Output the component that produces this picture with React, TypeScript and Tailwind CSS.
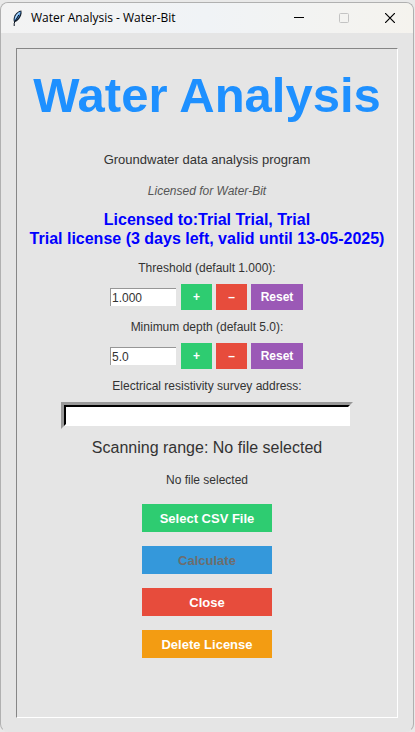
import { useState } from "react";

type StepperProps = {
  id: string;
  label: string;
  initial: number;
  step: number;
  digits: number;
};

function Stepper({ id, label, initial, step, digits }: StepperProps) {
  const [value, setValue] = useState(initial.toFixed(digits));

  const change = (delta: number) => {
    setValue(((parseFloat(value) || 0) + delta).toFixed(digits));
  };

  return (
    <div className="flex flex-col items-center">
      <label htmlFor={id} className="text-[12px] leading-5">
        {label}
      </label>
      <div className="mt-1.5 flex items-center gap-1 pr-px">
        <input
          id={id}
          type="text"
          value={value}
          onChange={(e) => setValue(e.target.value)}
          className="mr-px h-[18px] w-[66px] border-t border-l border-[#969696] bg-white px-px text-[12px] outline-none"
        />
        <button
          onClick={() => change(step)}
          className="h-[26px] w-[31px] bg-[#2ecc71] text-[12px] font-bold text-white"
        >
          +
        </button>
        <button
          onClick={() => change(-step)}
          className="h-[26px] w-[31px] bg-[#e74c3c] text-[12px] font-bold text-white"
        >
          –
        </button>
        <button
          onClick={() => setValue(initial.toFixed(digits))}
          className="h-[26px] w-[52px] bg-[#9b59b6] text-[12px] font-bold text-white"
        >
          Reset
        </button>
      </div>
    </div>
  );
}

function FeatherIcon() {
  return (
    <svg width="16" height="16" viewBox="0 0 16 16" aria-hidden="true">
      <path
        d="M12.4 .6C9.4 .8 6.4 3.4 5.2 6.6C4.4 8.8 4.4 10.6 5 12L7.4 11.6C10 9.6 12.2 6.4 12.6 3.2Z"
        fill="#14202e"
      />
      <path
        d="M11.8 1.4C9.4 2 7 4.4 6 7C5.4 8.8 5.4 10 5.8 11C8.8 9 11.4 5.6 11.8 1.4Z"
        fill="#4f97e0"
      />
      <path d="M10.6 2.6C8.6 4 7 6.2 6.4 8.6" stroke="#b4dafb" strokeWidth="1.2" fill="none" />
      <path d="M9.8 5L6.2 11L5.2 13.2V16" stroke="#0c1420" strokeWidth="1" fill="none" />
    </svg>
  );
}

function TitleBar() {
  return (
    <header className="flex h-[30px] items-center bg-linear-to-r from-[#f3f3f3] via-[#f0f3f6] to-[#f5f3ee] pl-2">
      <FeatherIcon />
      <h2 className="ml-1.5 flex-1 font-['Open_Sans','Noto_Sans',sans-serif] text-[12px] text-black">
        Water Analysis - Water-Bit
      </h2>
      <button aria-label="Minimize" className="flex h-full w-[45px] items-center justify-center">
        <svg width="10" height="10" viewBox="0 0 10 10">
          <path d="M0 4.5H10" stroke="#000" />
        </svg>
      </button>
      <button
        aria-label="Maximize"
        disabled
        className="flex h-full w-[46px] items-center justify-center"
      >
        <svg width="10" height="10" viewBox="0 0 10 10">
          <rect x=".5" y=".5" width="9" height="9" rx="1" fill="none" stroke="#c3c3c3" />
        </svg>
      </button>
      <button aria-label="Close window" className="flex h-full w-[46px] items-center justify-center">
        <svg width="10" height="10" viewBox="0 0 10 10">
          <path d="M0 0L10 10M10 0L0 10" stroke="#000" strokeWidth="1.2" />
        </svg>
      </button>
    </header>
  );
}

export default function App() {
  return (
    <div className="flex min-h-screen flex-col bg-[#e9e9e9] pt-0.5 pr-px font-['Liberation_Sans',Arial,sans-serif] text-[#333]">
      <div className="flex flex-1 flex-col overflow-hidden rounded-lg border border-[#b0b0b0] border-b-[#e5e5e5] bg-[#e5e5e5]">
        <TitleBar />

        <main className="mx-[15px] mt-[15px] mb-[13px] flex flex-1 flex-col items-center border border-t-[#868686] border-r-white border-b-white border-l-[#868686] pt-[18px]">
          <h1 className="text-[49px] leading-14 font-bold whitespace-nowrap text-[#1e90ff]">
            Water Analysis
          </h1>
          <p className="mt-[27px] text-[13px] leading-5">Groundwater data analysis program</p>
          <p className="mt-[11px] text-[12px] leading-5 text-[#555] italic">
            Licensed for Water-Bit
          </p>
          <p className="mt-[9px] text-center text-[16px] leading-[19px] font-bold whitespace-nowrap text-[#0000ff]">
            Licensed to:Trial Trial, Trial
            <br />
            Trial license (3 days left, valid until 13-05-2025)
          </p>

          <div className="mt-2.5 flex flex-col gap-[7px]">
            <Stepper
              id="threshold"
              label="Threshold (default 1.000):"
              initial={1}
              step={0.001}
              digits={3}
            />
            <Stepper
              id="depth"
              label="Minimum depth (default 5.0):"
              initial={5}
              step={0.5}
              digits={1}
            />
          </div>

          <label htmlFor="address" className="mt-[7px] text-[12px] leading-5">
            Electrical resistivity survey address:
          </label>
          {/* sunken field, two rings */}
          <div className="mt-1.5 flex border-3 border-t-[#999] border-r-[#e5e5e5] border-b-[#e5e5e5] border-l-[#999]">
            <input
              id="address"
              type="text"
              className="h-[21px] w-[286px] border-2 border-t-black border-r-white border-b-white border-l-black bg-white px-0.5 text-[13px] outline-none"
            />
          </div>

          <p className="mt-[9px] text-[16px] leading-5">Scanning range: No file selected</p>
          <p className="mt-3 text-[12px] leading-5">No file selected</p>

          <div className="mt-3.5 flex w-[130px] flex-col gap-3.5 text-[13px] font-bold text-white">
            <button className="h-7 bg-[#2ecc71] pt-0.5">Select CSV File</button>
            <button disabled className="h-7 bg-[#3498db] pt-0.5 text-[#6d6d6d]">
              Calculate
            </button>
            <button className="h-7 bg-[#e74c3c] pt-0.5">Close</button>
            <button className="h-7 bg-[#f39c12] pt-0.5">Delete License</button>
          </div>
        </main>
      </div>
    </div>
  );
}
